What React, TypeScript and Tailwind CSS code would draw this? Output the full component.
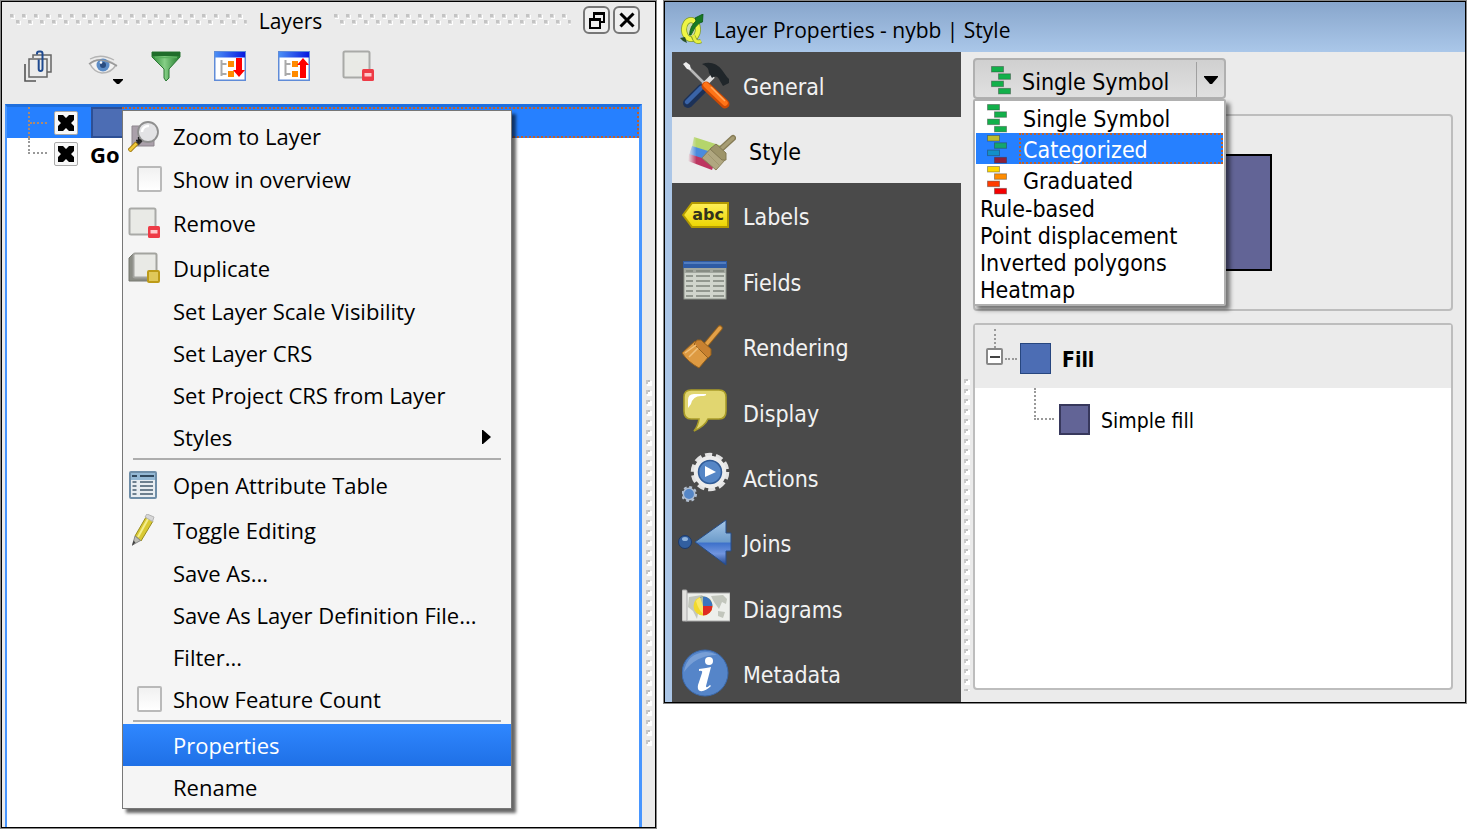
import React from "react";

type IconProps = { className?: string };

/* ---------- grips ---------- */

function TitleGrip({ id }: { id: string }) {
  return (
    <svg className="h-3 min-w-0 flex-1" aria-hidden="true">
      <defs>
        <pattern id={id} width="12" height="12" patternUnits="userSpaceOnUse">
          <rect x="1" y="1" width="4" height="4" fill="#fff" />
          <rect x="0" y="0" width="4" height="4" fill="#dcdcdc" />
          <rect x="0" y="0" width="3" height="3" fill="#c4c4c4" />
          <rect x="7" y="7" width="4" height="4" fill="#fff" />
          <rect x="6" y="6" width="4" height="4" fill="#dcdcdc" />
          <rect x="6" y="6" width="3" height="3" fill="#c4c4c4" />
        </pattern>
      </defs>
      <rect width="100%" height="12" fill={`url(#${id})`} />
    </svg>
  );
}

function SplitterGrip({ id, className = "" }: { id: string; className?: string }) {
  return (
    <svg className={className} aria-hidden="true">
      <defs>
        <pattern id={id} width="6" height="10" patternUnits="userSpaceOnUse">
          <rect x="1" y="1" width="5" height="5" fill="#fff" />
          <rect x="0" y="0" width="4" height="2" fill="#bdbdbd" />
          <rect x="0" y="0" width="2" height="4" fill="#c8c8c8" />
        </pattern>
      </defs>
      <rect width="6" height="100%" fill={`url(#${id})`} />
    </svg>
  );
}

/* ---------- toolbar icons ---------- */

function GroupIcon() {
  return (
    <svg viewBox="0 0 32 32" className="h-8 w-8" fill="none">
      <path d="M3 14v17h11" stroke="#555" strokeWidth="1.6" />
      <path d="M11 8V5h18v17h-4" stroke="#666" strokeWidth="1.5" />
      <rect x="7" y="9" width="18" height="18" fill="#ececec" stroke="#666" strokeWidth="1.5" />
      <path d="M15 4.500V3.500a2 2 0 0 1 2-2h1.500a2 2 0 0 1 2 2V19a1.800 1.800 0 0 1-3.800 0V9.500" stroke="#1f4a90" strokeWidth="2" />
    </svg>
  );
}

function EyeIcon() {
  return (
    <svg viewBox="0 0 36 34" className="h-[34px] w-9" fill="none">
      <path d="M3 12Q14 3 29 13Q24 21 15 21Q7 20 3 12Z" fill="#f2f2f2" stroke="#b4b4b4" strokeWidth="1.500" />
      <circle cx="16" cy="13" r="6.500" fill="#5c8cc6" />
      <circle cx="16" cy="13" r="3" fill="#2b4d80" />
      <circle cx="14" cy="10.500" r="1.300" fill="#fff" />
      <path d="M3 7Q14 1 27 8" stroke="#b4b4b4" strokeWidth="1.300" />
      <path d="M2 12Q12 3 30 14" stroke="#999" strokeWidth="1.500" />
      <path d="M26 27h10v1l-4 4h-2l-4-4z" fill="#000" />
    </svg>
  );
}

function FunnelIcon() {
  return (
    <svg viewBox="0 0 30 32" className="h-8 w-[30px]">
      <defs>
        <linearGradient id="funnel" x1="0" x2="1">
          <stop offset="0" stopColor="#2d8a37" />
          <stop offset=".45" stopColor="#86cf86" />
          <stop offset="1" stopColor="#1f7a2a" />
        </linearGradient>
      </defs>
      <path d="M1 2h28v5L18 19v9l-3 3-2-3v-9L1 7z" fill="url(#funnel)" stroke="#2a7733" />
      <path d="M1 2h28v4H1z" fill="#1f6d2a" />
      <path d="M4 7.500h22" stroke="#59b05e" strokeWidth="1.500" />
    </svg>
  );
}

function TreeWindowIcon({ up }: { up?: boolean }) {
  const id = up ? "collapse-bar" : "expand-bar";
  return (
    <svg viewBox="0 0 32 30" className="h-[30px] w-8">
      <defs>
        <linearGradient id={id} x1="0" x2="1">
          <stop offset="0" stopColor="#4b8ff5" />
          <stop offset="1" stopColor="#0719e0" />
        </linearGradient>
      </defs>
      <rect x=".75" y=".75" width="30.500" height="28.500" fill="#fff" stroke="#5f8bd8" strokeWidth="1.500" />
      <rect x="1" y="1" width="30" height="5.500" fill={`url(#${id})`} />
      <path d="M7.500 9v16M7.500 13h5M7.500 23h5" stroke="#aaa" strokeWidth="2" fill="none" />
      <rect x="14" y="10" width="6" height="6" fill="#ff8a00" />
      <rect x="14" y="20" width="6" height="6" fill="#ff8a00" />
      {up ? (
        <path d="M25 7l6 7h-3v13h-6V14H19z" fill="#f00" />
      ) : (
        <path d="M22 7h6v12H31l-6 7-6-7h3z" fill="#f00" />
      )}
    </svg>
  );
}

function RemoveIcon() {
  return (
    <svg viewBox="0 0 32 32" className="h-8 w-8">
      <rect x="1.500" y="1.500" width="26" height="26" rx="1.500" fill="#e9eae6" stroke="#a9aaa7" strokeWidth="2" />
      <rect x="20" y="19" width="12" height="12" rx="1.500" fill="#ee3b46" />
      <rect x="22.500" y="23" width="7" height="3.500" fill="#ffc9cc" />
    </svg>
  );
}

/* ---------- menu icons ---------- */

function ZoomLayerIcon() {
  return (
    <svg viewBox="0 0 32 32" className="h-8 w-8">
      <path d="M4 6h22v20H4z" fill="#aaa0aa" stroke="#8d858d" />
      <circle cx="20" cy="12" r="10" fill="#e3e3e5" stroke="#8f8f8f" strokeWidth="1.800" />
      <path d="M14 12a6 6 0 0 1 7-6" stroke="#fff" strokeWidth="2.500" fill="none" />
      <path d="M13 20l-4 4" stroke="#333" strokeWidth="4" />
      <path d="M9 23l-8 8" stroke="#a07a12" strokeWidth="4.500" />
      <path d="M8.500 23.500l-7 7" stroke="#f0c93a" strokeWidth="2.500" />
      <path d="M10.500 17v6M8 20.500h5.500" stroke="#222" strokeWidth="1.300" />
    </svg>
  );
}

function DuplicateIcon() {
  return (
    <svg viewBox="0 0 32 32" className="h-8 w-8">
      <path d="M1 6l4-4v22h20v5H1z" fill="#8b8d85" stroke="#777970" />
      <rect x="5.500" y="1.500" width="23" height="24" rx="1.500" fill="#e9eae6" stroke="#a3a49f" strokeWidth="2" />
      <rect x="20" y="19" width="11" height="11" rx="1" fill="#e0c85a" stroke="#bd9b18" strokeWidth="2" />
    </svg>
  );
}

function TableIcon() {
  return (
    <svg viewBox="0 0 32 32" className="h-8 w-8">
      <rect x="2" y="3" width="26" height="26" rx="1" fill="#e8edf1" stroke="#6f8ea8" strokeWidth="2" />
      <rect x="3" y="4" width="24" height="7" fill="#94b8d4" />
      <path d="M4 7h5M12 7h14" stroke="#31495e" strokeWidth="2" />
      <path d="M4.500 13h4M12 13h13M4.500 17h4M12 17h13M4.500 21h4M12 21h13M4.500 25h4M12 25h13" stroke="#6d7f8e" strokeWidth="1.800" />
    </svg>
  );
}

function PencilIcon() {
  return (
    <svg viewBox="0 0 32 32" className="h-8 w-8">
      <path d="M18 3l7 4-12 20-6-5z" fill="#d9c932" stroke="#978b20" />
      <path d="M20 5L10 23" stroke="#f4ee8d" strokeWidth="2" />
      <path d="M17 3l2-3 7 3-1.500 4.500z" fill="#d7d7d7" stroke="#b5b5b5" />
      <path d="M7 22l5.500 4.500L4.500 31z" fill="#bdbdb5" stroke="#888" />
      <path d="M5.500 26.500l2 2L4 32z" fill="#444" />
    </svg>
  );
}

/* ---------- properties window icons ---------- */

function QgisIcon() {
  return (
    <svg viewBox="0 0 24 32" className="h-8 w-6">
      <ellipse cx="11" cy="15.500" rx="7" ry="9.500" fill="#c9dcae" stroke="#7f9a2a" strokeWidth="6" />
      <ellipse cx="11" cy="15.500" rx="7" ry="9.500" fill="none" stroke="#eef545" strokeWidth="4.500" />
      <path d="M13 22l2 4q2 3 6 1" fill="none" stroke="#7f9a2a" strokeWidth="4.500" />
      <path d="M13 21l2 5q2 3 6 1" fill="none" stroke="#e6ef40" strokeWidth="3" />
      <path d="M9.500 21Q10 12 16 7l-1-3 8-4-.5 8-3 1Q15 12 11 21z" fill="#177a22" stroke="#0d5518" strokeWidth=".8" />
      <path d="M0 24l5-1 2 6-4-2z" fill="#29502b" />
    </svg>
  );
}

function ToolsIcon({ className }: IconProps) {
  return (
    <svg viewBox="0 0 48 48" className={className}>
      <path d="M4 4L22 22" stroke="#b9b9b9" strokeWidth="2.500" />
      <path d="M1 3l3-2 4 3 1 5-4-1z" fill="#ededed" />
      <path d="M31 15L19 27" stroke="#dedede" strokeWidth="5" />
      <path d="M20 3q12-4 20 6l5 7 2 2v4l-6 3-3-5q-3-7-8-3l-3-5q0-6-7-9z" fill="#20262a" />
      <path d="M20 28L6 42" stroke="#1c3157" strokeWidth="10" strokeLinecap="round" />
      <path d="M19 27L5 41" stroke="#3a64a8" strokeWidth="4.500" strokeLinecap="round" />
      <path d="M24 25L43 43" stroke="#cb4a05" strokeWidth="9" strokeLinecap="round" />
      <path d="M24 24L43 42" stroke="#ff7418" strokeWidth="5.500" strokeLinecap="round" />
      <path d="M29 26l14 14" stroke="#ffa95c" strokeWidth="1.500" />
    </svg>
  );
}

function StyleIcon({ className }: IconProps) {
  return (
    <svg viewBox="0 0 48 48" className={className}>
      <defs>
        <linearGradient id="fade">
          <stop offset="0" stopColor="#ebebeb" />
          <stop offset=".25" stopColor="#ebebeb" stopOpacity="0" />
        </linearGradient>
      </defs>
      <path d="M6 11L34 20l-4 8L4 21z" fill="#b5d56b" />
      <path d="M4 20l26 8-4 8L1 29z" fill="#4b8bdd" />
      <path d="M1 28l26 8-3 8L0 35z" fill="#bd3560" />
      <path d="M0 8h34v38H0z" fill="url(#fade)" />
      <path d="M33 23L45 12" stroke="#857b56" strokeWidth="6" strokeLinecap="round" />
      <path d="M33 23L45 12" stroke="#a79d74" strokeWidth="3.500" strokeLinecap="round" />
      <path d="M24 21l13 13-9 10-14-12z" fill="#b0a780" stroke="#8a815c" />
      <path d="M28 18l10 9v7h-4l-12-11z" fill="#9d9469" stroke="#837a55" />
      <path d="M20 28l11 11" stroke="#a0976f" />
    </svg>
  );
}

function LabelsIcon({ className }: IconProps) {
  return (
    <svg viewBox="0 0 48 48" className={className}>
      <defs>
        <linearGradient id="tag" x2="0" y2="1">
          <stop offset="0" stopColor="#fff05a" />
          <stop offset="1" stopColor="#ecd500" />
        </linearGradient>
      </defs>
      <path d="M1 24L10 12h36v24H10z" fill="url(#tag)" stroke="#b39a00" strokeWidth="2" />
      <text x="26" y="29" textAnchor="middle" fontFamily="DejaVu Sans, sans-serif" fontWeight="700" fontSize="16" fill="#33331c">abc</text>
    </svg>
  );
}

function FieldsIcon({ className }: IconProps) {
  return (
    <svg viewBox="0 0 48 48" className={className}>
      <rect x="2" y="5" width="42" height="37" fill="#d0d5cc" stroke="#8b9188" />
      <rect x="2" y="8" width="42" height="8" fill="#a2a79f" />
      <rect x="1" y="4" width="44" height="7" fill="#2e5ba5" />
      <path d="M2 6h42" stroke="#5f88c8" strokeWidth="1.500" />
      {[14, 19, 24, 29, 34, 39].map((y) => (
        <path key={y} d={`M4 ${y}h7M14 ${y}h14M31 ${y}h11`} stroke="#7e847b" strokeWidth="1.500" />
      ))}
    </svg>
  );
}

function BroomIcon({ className }: IconProps) {
  return (
    <svg viewBox="0 0 48 48" className={className}>
      <path d="M22 25L38 6" stroke="#93601c" strokeWidth="5.500" strokeLinecap="round" />
      <path d="M22 25L38 6" stroke="#e2a048" strokeWidth="3.500" strokeLinecap="round" />
      <path d="M13 19l15 14-11 13Q6 40 0 31z" fill="#dd9a42" stroke="#94601d" />
      <path d="M15 18h4l10 9v6l-3 3-14-14z" fill="#c88130" stroke="#94601d" />
      <path d="M3 31l11-8M7 35l9-9" stroke="#f0c07a" strokeWidth="1.500" />
    </svg>
  );
}

function BubbleIcon({ className }: IconProps) {
  return (
    <svg viewBox="0 0 48 48" className={className}>
      <path d="M9 2h28q7 0 7 7v14q0 8-7 8H26q-3 7-14 12 4-5 5-12H9q-7 0-7-8V9q0-7 7-7z" fill="#e1d670" stroke="#a99c28" strokeWidth="1.600" />
      <path d="M6 20V12q0-6 6-6h12q1 2-5 2-8 0-10 8z" fill="#fff" />
    </svg>
  );
}

function ActionsIcon({ className }: IconProps) {
  return (
    <svg viewBox="0 0 48 52" className={className}>
      <circle cx="28" cy="21" r="17" fill="none" stroke="#e2e2e2" strokeWidth="4.500" strokeDasharray="7 3.680" />
      <circle cx="28" cy="21" r="14" fill="#4f81c2" stroke="#ececec" strokeWidth="4.500" />
      <circle cx="28" cy="21" r="11.500" fill="#5586c6" stroke="#315c98" strokeWidth="1.500" />
      <path d="M23 15l11 6-11 5z" fill="#fff" />
      <circle cx="7" cy="43" r="7" fill="none" stroke="#b4c1d2" strokeWidth="2" strokeDasharray="2.900 2.600" />
      <circle cx="7" cy="43" r="5.700" fill="#5586c6" stroke="#aebed3" strokeWidth="1.500" />
    </svg>
  );
}

function JoinsIcon({ className }: IconProps) {
  return (
    <svg viewBox="0 0 54 48" className={className}>
      <defs>
        <linearGradient id="join" x2="0" y2="1">
          <stop offset="0" stopColor="#a6c7e9" />
          <stop offset=".48" stopColor="#6e9dcb" />
          <stop offset=".52" stopColor="#3f72cb" />
          <stop offset=".75" stopColor="#7195df" />
          <stop offset="1" stopColor="#20448d" />
        </linearGradient>
      </defs>
      <circle cx="7" cy="24" r="6.500" fill="#325fa0" stroke="#1c3969" />
      <ellipse cx="7" cy="21" rx="3" ry="2" fill="#91b4dc" />
      <path d="M17 24L48 2v13h5v18h-5v14z" fill="url(#join)" stroke="#264d88" />
    </svg>
  );
}

function DiagramsIcon({ className }: IconProps) {
  return (
    <svg viewBox="0 0 48 48" className={className}>
      <rect x="4" y="9" width="44" height="28" fill="#edefeb" stroke="#aaa" />
      <path d="M7 13l13-2 4 5-7 8-2 11-4-8-5-4zM29 12l12-1 4 4-1 5-4-2-3 7-5-7zM36 27l7 1-2 6-5-2z" fill="#c2c6bc" />
      <rect x="0" y="6" width="5" height="31" rx="1" fill="#e2e2df" stroke="#aaa" />
      <circle cx="21" cy="22" r="9.500" fill="#f2d92b" />
      <path d="M21 22V31.500a9.500 9.500 0 0 0 9.500-9.500z" fill="#df2a22" />
      <path d="M21 22L18 13a9.500 9.500 0 0 1 12.500 9z" fill="#3c74bc" />
      <path d="M14 17q3-4 7-4v17q-5-5-7-13z" fill="#fff28a" opacity=".6" />
    </svg>
  );
}

function InfoIcon({ className }: IconProps) {
  return (
    <svg viewBox="0 0 48 48" className={className}>
      <circle cx="23" cy="24" r="23" fill="#5585c9" stroke="#3b69ab" strokeWidth="1" />
      <path d="M2 23Q5 4 24 3q6 0 11 3Q14 6 2 23z" fill="#8fb0e0" opacity=".6" />
      <circle cx="27" cy="12" r="4" fill="#fff" />
      <path d="M17 20q8-1 12-2l-5 19q0 3 4-1l1 1q-6 6-11 5-3-1-2-6l4-12q1-3-3-2z" fill="#fff" />
    </svg>
  );
}

function SymbolIcon({ colors }: { colors: string[] }) {
  return (
    <svg viewBox="0 0 22 30" className="h-[30px] w-[22px] shrink-0">
      {colors.map((c, i) => (
        <rect key={i} x={i % 2 ? 8.5 : 1.5} y={1.5 + i * 7.3} width="12" height="5.500" fill={c} stroke="#333" strokeOpacity=".4" />
      ))}
    </svg>
  );
}

/* ---------- data ---------- */

const GREEN = ["#12b04a", "#12b04a", "#12b04a", "#12b04a"];
const CATEGORIES = ["#bdbb2c", "#14a56e", "#1290c8", "#8d1f3c"];
const GRADES = ["#ffd800", "#ff8c00", "#ff3c00", "#f50000"];

const symbolRenderers = [
  { label: "Single Symbol", colors: GREEN },
  { label: "Categorized", colors: CATEGORIES, selected: true },
  { label: "Graduated", colors: GRADES },
];
const plainRenderers = ["Rule-based", "Point displacement", "Inverted polygons", "Heatmap"];

const tabs = [
  { label: "General", Icon: ToolsIcon, size: "h-12 w-12" },
  { label: "Style", Icon: StyleIcon, size: "h-12 w-12", selected: true },
  { label: "Labels", Icon: LabelsIcon, size: "h-12 w-12" },
  { label: "Fields", Icon: FieldsIcon, size: "h-12 w-12" },
  { label: "Rendering", Icon: BroomIcon, size: "h-12 w-12" },
  { label: "Display", Icon: BubbleIcon, size: "h-12 w-12" },
  { label: "Actions", Icon: ActionsIcon, size: "h-[52px] w-12" },
  { label: "Joins", Icon: JoinsIcon, size: "h-12 w-[54px] -ml-1 -mr-0.5" },
  { label: "Diagrams", Icon: DiagramsIcon, size: "h-12 w-12" },
  { label: "Metadata", Icon: InfoIcon, size: "h-12 w-12" },
];

/* ---------- left: layers panel ---------- */

function MenuItem({ label, icon, active, submenu }: { label: string; icon?: React.ReactNode; active?: boolean; submenu?: boolean }) {
  return (
    <button
      type="button"
      role="menuitem"
      className={`flex w-full items-center gap-[13px] pl-[5px] pr-5 text-left ${icon ? "h-[45px]" : "h-[42px]"} ${
        active ? "bg-linear-to-b from-[#2f87ff] to-[#1f70e6] text-white" : ""
      }`}
    >
      <span className="w-8 shrink-0">{icon}</span>
      <span className="flex-1">{label}</span>
      {submenu && (
        <svg viewBox="0 0 9 14" className="h-3.5 w-[9px]">
          <path d="M0 0h1l8 7-8 7H0z" fill="#000" />
        </svg>
      )}
    </button>
  );
}

function MenuCheck({ label }: { label: string }) {
  return (
    <label className="flex h-[42px] items-center gap-[11px] pl-3.5">
      <input type="checkbox" className="h-[26px] w-[25px] appearance-none rounded-xs border-2 border-[#b9b9b9] bg-linear-to-b from-[#f1f1f1] to-white" />
      {label}
    </label>
  );
}

function MenuRule() {
  return <div role="separator" className="mr-2.5 ml-2.5 h-1 border-t-2 border-[#adadad]" />;
}

function ContextMenu() {
  return (
    <div
      role="menu"
      className="absolute top-[3px] left-[115px] w-[390px] border border-[#777] bg-[#f5f5f5] pt-0.5 shadow-[4px_4px_3px_0_rgba(0,0,0,0.6)]"
    >
      <MenuItem label="Zoom to Layer" icon={<ZoomLayerIcon />} />
      <MenuCheck label="Show in overview" />
      <MenuItem label="Remove" icon={<RemoveIcon />} />
      <MenuItem label="Duplicate" icon={<DuplicateIcon />} />
      <MenuItem label="Set Layer Scale Visibility" />
      <MenuItem label="Set Layer CRS" />
      <MenuItem label="Set Project CRS from Layer" />
      <MenuItem label="Styles" submenu />
      <MenuRule />
      <MenuItem label="Open Attribute Table" icon={<TableIcon />} />
      <MenuItem label="Toggle Editing" icon={<PencilIcon />} />
      <MenuItem label="Save As..." />
      <MenuItem label="Save As Layer Definition File..." />
      <MenuItem label="Filter..." />
      <MenuCheck label="Show Feature Count" />
      <MenuRule />
      <MenuItem label="Properties" active />
      <MenuItem label="Rename" />
    </div>
  );
}

function LayerCheck({ label }: { label: string }) {
  return (
    <span className="grid h-6 w-6 shrink-0 place-items-center">
      <input
        type="checkbox"
        defaultChecked
        aria-label={label}
        className="col-start-1 row-start-1 h-6 w-6 appearance-none rounded-xs border border-[#aaa] bg-[#f8f8f8]"
      />
      <svg viewBox="0 0 18 18" className="pointer-events-none col-start-1 row-start-1 h-[18px] w-[18px]">
        <path d="M1 1h5l3 3 3-3h5v5l-3 3 3 3v5h-5l-3-3-3 3H1v-5l3-3-3-3z" fill="#000" />
      </svg>
    </span>
  );
}

function ToolButton({ label, children }: { label: string; children: React.ReactNode }) {
  return (
    <button type="button" aria-label={label} className="flex h-9 w-9 items-center justify-center">
      {children}
    </button>
  );
}

function LayersPanel() {
  return (
    <section className="flex min-h-[827px] min-w-0 flex-col border border-black bg-[#ebebeb] font-['Open_Sans','Noto_Sans',sans-serif] text-[22px] leading-7 outline outline-[#888]">
      <header className="flex h-9 items-center gap-3 pr-[15px] pl-2">
        <TitleGrip id="grip-left" />
        <h1 className="pt-0.5 text-[21px]">Layers</h1>
        <TitleGrip id="grip-right" />
        <div className="flex gap-[3px]">
          <button type="button" aria-label="Float" className="grid h-7 w-[27px] place-items-center rounded-md border-2 border-[#777] bg-[#f0f0f0]">
            <svg viewBox="0 0 16 18" className="h-[18px] w-4" fill="none" stroke="#000" strokeWidth="2">
              <path d="M5 7V2h10v9h-4M5 3h10" />
              <path d="M1 8h10v9H1zM1 9h10" />
            </svg>
          </button>
          <button type="button" aria-label="Close" className="grid h-7 w-[27px] place-items-center rounded-md border-2 border-[#777] bg-[#f0f0f0]">
            <svg viewBox="0 0 16 16" className="h-4 w-4" fill="none" stroke="#000" strokeWidth="3">
              <path d="M1.500 1.500l13 13M14.500 1.500l-13 13" />
            </svg>
          </button>
        </div>
      </header>
      <div className="flex h-[66px] items-start gap-7 pt-2.5 pl-[18px]">
        <ToolButton label="Add group"><GroupIcon /></ToolButton>
        <ToolButton label="Manage visibility"><span className="pt-1.5 pl-1.5"><EyeIcon /></span></ToolButton>
        <ToolButton label="Filter legend"><FunnelIcon /></ToolButton>
        <ToolButton label="Expand all"><TreeWindowIcon /></ToolButton>
        <ToolButton label="Collapse all"><TreeWindowIcon up /></ToolButton>
        <ToolButton label="Remove layer"><RemoveIcon /></ToolButton>
      </div>
      <div className="flex flex-1 pl-[3px]">
        <div className="relative min-w-0 flex-1 border-t-[3px] border-r-[3px] border-l-2 border-[#4896ff] border-t-[#1f6fdd] bg-white">
          <div className="flex h-[31px] items-center bg-[#2680ff]">
            <span className="ml-[21px] flex h-full w-[19px] shrink-0 items-center border-l-2 border-dotted border-[#b08a6c]">
              <span className="w-full border-t-2 border-dotted border-[#b08a6c]" />
            </span>
            <span className="ml-[7px]"><LayerCheck label="nybb" /></span>
            <span className="ml-[13px] h-full w-[31px] shrink-0 border-2 border-r-0 border-[#2c4f96] bg-[#4c6db4]" />
            <span className="h-full flex-1 border-2 border-dotted border-[#c0602a]" />
          </div>
          <div className="flex h-[31px] items-center">
            <span className="ml-[21px] h-4 w-[19px] shrink-0 self-start border-b-2 border-l-2 border-dotted border-[#999]" />
            <span className="ml-[7px]"><LayerCheck label="Google layer" /></span>
            <span className="ml-3 font-bold">Go</span>
          </div>
          <ContextMenu />
        </div>
        <div className="w-[13px] shrink-0 pt-[276px] pl-1">
          <SplitterGrip id="split-left" className="h-[366px] w-1.5" />
        </div>
      </div>
    </section>
  );
}

/* ---------- right: layer properties ---------- */

function RendererPicker() {
  return (
    <div className="relative z-10 w-[253px] text-[23px]">
      <div className="grid h-[41px] items-center rounded-sm border-2 border-[#b0b0b0] bg-linear-to-b from-[#d0d0d0] to-[#e0e0e0]">
        <select aria-label="Renderer" className="col-start-1 row-start-1 h-full w-full appearance-none pt-1.5 pl-[47px] text-black">
          <option>Single Symbol</option>
        </select>
        <span className="pointer-events-none col-start-1 row-start-1 flex h-full items-center justify-between pt-0.5 pl-[15px]">
          <SymbolIcon colors={GREEN} />
          <span className="flex h-full w-[28px] items-center justify-center border-l border-[#a0a0a0]">
            <svg viewBox="0 0 14 8" className="h-2 w-3.5">
              <path d="M0 0h14v1L8 8H6L0 1z" fill="#000" />
            </svg>
          </span>
        </span>
      </div>
      <ul role="listbox" className="absolute top-[41px] left-0 w-full rounded-xs border-2 border-[#b0b0b0] bg-white px-px pb-px pt-px shadow-[4px_4px_4px_0_rgba(0,0,0,0.5)]">
        {symbolRenderers.map((r) => (
          <li
            key={r.label}
            role="option"
            aria-selected={!!r.selected}
            className={`flex h-[31px] items-center pl-2.5 ${r.selected ? "bg-[#2680ff] text-white" : ""}`}
          >
            <SymbolIcon colors={r.colors} />
            <span className={`ml-[11px] flex h-full flex-1 items-center border-2 border-dotted pt-0.5 pl-0.5 ${r.selected ? "border-[#c0602a]" : "border-transparent"}`}>
              {r.label}
            </span>
          </li>
        ))}
        {plainRenderers.map((label) => (
          <li key={label} role="option" aria-selected={false} className="flex h-[27px] items-center pl-1">
            {label}
          </li>
        ))}
      </ul>
    </div>
  );
}

function PropertiesWindow() {
  return (
    <section className="min-w-0 border border-black bg-[#abc6e7] font-['DejaVu_Sans_Condensed','DejaVu_Sans',sans-serif] text-[21px] leading-7 outline outline-[#888]">
      <header className="flex h-[50px] items-center gap-2.5 bg-linear-to-b from-[#88a6cc] to-[#aac7e9] pt-1.5 pl-[15px] font-['Open_Sans','Noto_Sans',sans-serif]">
        <QgisIcon />
        <h2>Layer Properties - nybb | Style</h2>
      </header>
      <div className="ml-[7px] flex h-[650px] overflow-hidden bg-[#ebebeb]">
        <nav role="tablist" className="grid h-[654px] w-[289px] shrink-0 auto-rows-fr bg-[#4a4a4a] text-[23px]">
          {tabs.map(({ label, Icon, size, selected }) => (
            <button
              key={label}
              type="button"
              role="tab"
              aria-selected={!!selected}
              className={`flex items-center gap-[13px] text-left ${selected ? "bg-[#ebebeb] pl-4 text-black" : "pl-2.5 text-[#f2f2f2]"}`}
            >
              <Icon className={`shrink-0 ${size}`} />
              <span className="pt-1">{label}</span>
            </button>
          ))}
        </nav>
        <div className="w-3 shrink-0 pt-[327px] pl-[3px]">
          <SplitterGrip id="split-right" className="h-[312px] w-1.5" />
        </div>
        <div className="flex min-w-0 flex-1 flex-col pt-[6px] pr-3 pb-3">
          <RendererPicker />
          <div className="mt-[15px] h-[197px] rounded-sm border-2 border-[#bdbdbd] pt-[38px]">
            <div className="ml-[180px] h-[117px] w-[117px] border-2 border-black bg-[#626496]" />
          </div>
          <div role="tree" className="mt-3 flex-1 rounded-sm border-2 border-[#bdbdbd] bg-white">
            <div role="treeitem" className="flex h-[63px] items-center bg-[#ebebeb] pt-1 pl-[11px]">
              <div className="flex h-full w-[17px] flex-col items-center">
                <span className="h-[19px] w-0 border-l-2 border-dotted border-[#999]" />
                <button type="button" aria-label="Collapse" className="grid h-[17px] w-[17px] place-items-center rounded-xs border-2 border-[#888] bg-white">
                  <span className="h-0.5 w-2.5 bg-[#444]" />
                </button>
              </div>
              <span className="ml-0.5 w-3 border-t-2 border-dotted border-[#999]" />
              <span className="ml-[3px] h-[31px] w-[31px] border border-[#27467f] bg-[#4c6db4]" />
              <span className="ml-[11px] pt-0.5 font-bold">Fill</span>
            </div>
            <div role="treeitem" className="flex h-[63px] items-center pl-[59px]">
              <span className="h-8 w-5 self-start border-b-2 border-l-2 border-dotted border-[#999]" />
              <span className="ml-[5px] h-[31px] w-[31px] border-2 border-[#37385c] bg-[#626496]" />
              <span className="ml-[11px] pt-0.5">Simple fill</span>
            </div>
          </div>
        </div>
      </div>
    </section>
  );
}

export default function App() {
  return (
    <main className="grid min-h-screen grid-cols-[655fr_802fr] items-start gap-2 bg-white p-px text-black">
      <LayersPanel />
      <PropertiesWindow />
    </main>
  );
}
